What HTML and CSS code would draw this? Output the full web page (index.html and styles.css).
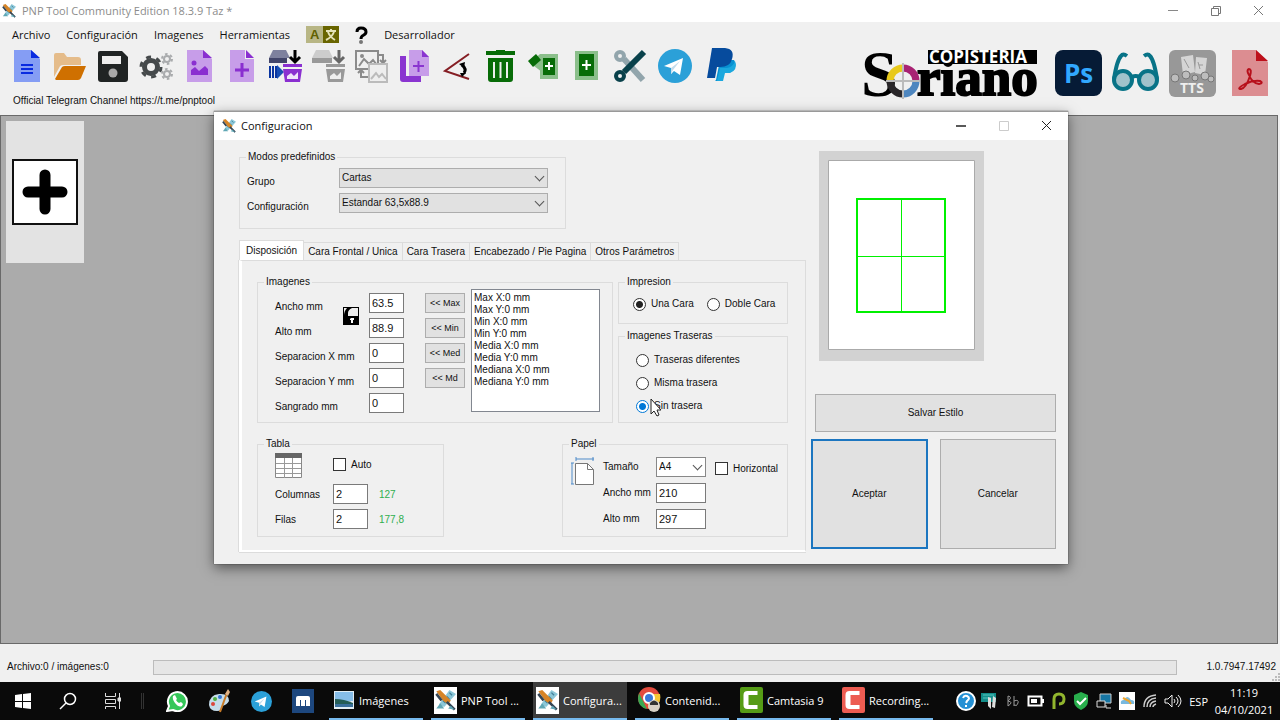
FILE: index.html
```html
<!DOCTYPE html>
<html lang="es">
<head>
<meta charset="utf-8">
<title>PNP Tool Community Edition</title>
<link rel="stylesheet" href="styles.css">
</head>
<body>
<svg class="defs" aria-hidden="true">
  <symbol id="app" viewBox="0 0 16 16">
    <path d="M11 0l5 3-9 10-4-2z" fill="#8cc7d8"/><path d="M11 2l2 2M9 5l2 2M6 8l2 2" stroke="#42809a"/>
    <path d="M1 1l3-1 8 8-2 3-4-3z" fill="#d68427"/><path d="M9 9l6 6M1 3l4 5" stroke="#354554" stroke-width="2"/>
    <path d="M1 14l3-4 3 4zM10 14l2-2 3 3z" fill="#5fa7b5"/>
  </symbol>
  <symbol id="plane" viewBox="0 0 34 34">
    <circle cx="17" cy="17" r="17" fill="#2ba0d8"/><path d="M6 17L25 9l-3 17-6-4-3 3v-6z" fill="#fff"/><path d="M13 19l9-7-7 9-2 4z" fill="#c3dcec"/>
  </symbol>
  <symbol id="cam" viewBox="0 0 22 26">
    <path d="M17 4H7Q3 4 3 8v10q0 4 4 4h10v-4H8V8h9z" fill="#fff"/>
  </symbol>
</svg>

<header class="titlebar">
  <svg class="app-icon"><use href="#app"/></svg>
  <span class="title">PNP Tool Community Edition 18.3.9 Taz *</span>
  <div class="caption">
    <button aria-label="Minimizar"><svg width="12" height="12"><path d="M1 5.500h10" stroke="#888"/></svg></button>
    <button aria-label="Restaurar"><svg width="12" height="12" fill="none" stroke="#777"><path d="M1.500 3.500h7v7h-7zM3.500 3v-1.500h7v7H9"/></svg></button>
    <button aria-label="Cerrar"><svg width="12" height="12"><path d="M1 1l9 9M10 1l-9 9" stroke="#777"/></svg></button>
  </div>
</header>

<nav class="menubar">
  <button>Archivo</button>
  <button>Configuración</button>
  <button>Imagenes</button>
  <button>Herramientas</button>
  <button aria-label="Idioma"><svg width="33" height="17"><path d="M0 0h17v17H0z" fill="#b8b685"/><path d="M17 0h16v17H17z" fill="#696500"/><text x="4" y="13" class="az">A</text><path d="M20 5h10M25 3v2M22 6q2 5 7 8M28 6q-2 5-8 8" fill="none" stroke="#e5e3b8" stroke-width="2"/></svg></button>
  <button aria-label="Ayuda"><svg width="13" height="18"><path d="M2 6q0-4 4-4 5 0 5 4 0 2-3 3.500-2 1-2 3.500" fill="none" stroke="#000" stroke-width="3"/><circle cx="6" cy="16" r="2" fill="#777"/></svg></button>
  <button>Desarrollador</button>
</nav>

<section class="toolarea">
  <div class="toolleft">
    <div class="toolbar">
      <button aria-label="Nuevo"><svg viewBox="0 0 34 34"><path d="M4 1h17l9 9v23H4z" fill="#859df4"/><path d="M21 1v8h9z" fill="#0a2be0"/><path d="M11 16h12M11 20h12M11 24h12" stroke="#0a2be0" stroke-width="2"/></svg></button>
      <button aria-label="Abrir"><svg viewBox="0 0 34 34"><path d="M1 28V6q0-2 2-2h8l3 4h11q3 0 3 3v5H10q-3 0-4 3z" fill="#e5bc8a"/><path d="M2 30l7-12q1-1 3-1h21l-5 12q-1 2-3 2H3z" fill="#cf7000"/></svg></button>
      <button aria-label="Guardar"><svg viewBox="0 0 34 34"><path d="M4 2h22l6 6v22q0 3-3 3H5q-3 0-3-3V4q0-2 2-2z" fill="#202424"/><path d="M6 7h19v8H6z" fill="#eee"/><circle cx="17" cy="24" r="4.500" fill="#aaa"/></svg></button>
      <button aria-label="Opciones"><svg viewBox="0 0 34 34" fill="none"><circle cx="12" cy="18" r="6.500" stroke="#45494b" stroke-width="5"/><circle cx="12" cy="18" r="10" stroke="#45494b" stroke-width="3" stroke-dasharray="5 5.470"/><circle cx="28" cy="10" r="3" stroke="#a9abad" stroke-width="2"/><circle cx="28" cy="10" r="5" stroke="#a9abad" stroke-width="2" stroke-dasharray="2.600 2.630"/><circle cx="28" cy="25" r="3" stroke="#a9abad" stroke-width="2"/><circle cx="28" cy="25" r="5" stroke="#a9abad" stroke-width="2" stroke-dasharray="2.600 2.630"/></svg></button>
      <button aria-label="Imagen"><svg viewBox="0 0 34 34"><path d="M5 1h16l9 9v23H5z" fill="#c79de9"/><path d="M21 1v8h9zM9 26v-5l4-3 4 4 6-5 3 3v6z" fill="#8a2fd0"/><circle cx="12" cy="14" r="2.500" fill="#8a2fd0"/></svg></button>
      <button aria-label="Añadir imagen"><svg viewBox="0 0 34 34"><path d="M5 1h15v9h9v23H5z" fill="#c79de9"/><path d="M21 1v8h8z" fill="#8a2fd0"/><path d="M10 21h14M17 14v14" stroke="#8a2fd0" stroke-width="3"/></svg></button>
      <button aria-label="Importar"><svg viewBox="0 0 34 34"><path d="M5 1h13l4 8H1z" fill="#7e819e"/><path d="M1 9h18v5H1z" fill="#42456a"/><path d="M2 17v12M5 17v12M8 17v12" stroke="#0a35a0" stroke-width="2"/><path d="M9 16l7 7-7 7z" fill="#174eb4"/><path d="M27 1v10M22 8l5 5 5-5" fill="none" stroke="#000" stroke-width="3"/><path d="M15 15h19v3H15zM15 20h19l-2 13H17z" fill="#8a2fd0"/><path d="M19 30v-3l4-3 3 3 4-4v7z" fill="#f0e3fa"/></svg></button>
      <button aria-label="Importar archivo"><svg viewBox="0 0 34 34"><path d="M5 1h13l4 8H1z" fill="#ccc"/><path d="M1 9h20v5H1z" fill="#999"/><path d="M28 1v10M23 8l5 5 5-5" fill="none" stroke="#666" stroke-width="3"/><path d="M15 15h19v3H15zM15 20h19l-2 13H17z" fill="#999"/><path d="M19 30v-3l4-3 3 3 4-4v7z" fill="#eee"/></svg></button>
      <button aria-label="Reemplazar"><svg viewBox="0 0 34 34" fill="none" stroke="#8b8b8b" stroke-width="2"><path d="M2 2h22v18H2zM5 17l5-7 5 5 4-4 4 5M24 6h5v8M26 11l3 3 3-3M7 20v8h8M4 24l3-3 3 3"/><circle cx="8" cy="7" r="1"/><g stroke="#bbb"><path d="M15 15h18v18H15z" fill="#eee"/><path d="M17 30l5-6 3 4 3-3 4 5"/></g></svg></button>
      <button aria-label="Duplicar"><svg viewBox="0 0 34 34"><path d="M3 7h6v20h15v6H6q-3 0-3-3z" fill="#8a35d0"/><path d="M12 1h13l7 7v19H12z" fill="#c79de9"/><path d="M25 1v7h7z" fill="#8a35d0"/><path d="M16 17h11M21.500 12v11" stroke="#8a35d0" stroke-width="2"/></svg></button>
      <button aria-label="Rotar"><svg viewBox="0 0 34 34" fill="none"><path d="M29 5L5 22l24 8" stroke="#851e24" stroke-width="2"/><path d="M22 16q5 4 2 8" stroke="#000" stroke-width="3"/><path d="M19 15l6-2-1 6zM20 24l6 0-4 4z" fill="#000"/></svg></button>
      <button aria-label="Eliminar"><svg viewBox="0 0 34 34"><path d="M3 2h10V1h9v1h10v4H3zM5 9h25v21q0 3-3 3H8q-3 0-3-3z" fill="#086c08"/><path d="M11 13v16M17.500 13v16M24 13v16" stroke="#eee" stroke-width="2"/></svg></button>
      <button aria-label="Girar cartas"><svg viewBox="0 0 34 34"><path d="M14 5h18v25H14z" fill="#8bbf8b"/><path d="M17 9h12v17H17z" fill="#086c08"/><path d="M19 17h8M23 13v8" stroke="#fff" stroke-width="2"/><path d="M4 14l10-9 2 6v12z" fill="#8bbf8b"/><path d="M2 12l8-7 5 6-8 7z" fill="#086c08"/></svg></button>
      <button aria-label="Añadir carta"><svg viewBox="0 0 34 34"><path d="M6 2h23v29H6z" fill="#8bbf8b"/><path d="M10 5h15v22H10z" fill="#086c08"/><path d="M13 16h9M17.500 11v10" stroke="#fff" stroke-width="2"/></svg></button>
      <button aria-label="Cortar"><svg viewBox="0 0 34 34" fill="none"><g stroke="#92a5ac" stroke-width="4"><circle cx="8" cy="7" r="4"/><path d="M12 10l19 21" stroke-width="6"/></g><g stroke="#09414b" stroke-width="4"><circle cx="8" cy="27" r="4"/><path d="M12 23L32 3" stroke-width="6"/></g></svg></button>
      <div class="social">
        <button aria-label="Telegram"><svg><use href="#plane"/></svg></button>
        <button aria-label="PayPal"><svg viewBox="0 0 34 34"><path d="M12 31l4-20h14q5 8-5 13h-6l-2 8h-6z" fill="#0891d2"/><path d="M8-1h13q10 1 7 11-2 8-12 8h-3l-2 11H3z" fill="#064b9d"/><path d="M13 32l3-13h7q6-1 8-7 3 9-5 12h-5l-2 8z" fill="#1ba8de"/></svg></button>
      </div>
    </div>
    <p class="channel">Official Telegram Channel https://t.me/pnptool</p>
  </div>
  <div class="brands">
    <svg class="soriano" viewBox="0 0 178 50">
      <text x="0" y="46" class="logo-s">S</text><text x="56" y="45" class="logo-rest">riano</text>
      <path d="M67 0h109v14H67z"/><text x="68" y="13" class="logo-top">COPISTERIA</text>
      <g fill="none" stroke-width="7"><path d="M29 31a13 13 0 0 1 13-13" stroke="#e8c91b"/><path d="M42 18a13 13 0 0 1 13 13" stroke="#a82273"/><path d="M55 31a13 13 0 0 1-13 13" stroke="#4e86bf"/><path d="M42 44a13 13 0 0 1-13-13" stroke="#292629"/></g>
      <path d="M25 31h34M42 13v36" stroke="#bbb" stroke-width="2"/>
    </svg>
    <svg class="brand" viewBox="0 0 47 47"><rect width="47" height="46" rx="8" fill="#061b36"/><text x="9" y="33" class="ps">Ps</text></svg>
    <svg class="brand" viewBox="0 0 47 47" fill="#a0c2cb" stroke="#087387" stroke-width="4"><path d="M2 29q3-19 7-23 2-3 6 0M45 29Q42 10 38 6q-2-3-6 0M20 27q4-2 7 0" fill="none"/><circle cx="11" cy="30" r="9"/><circle cx="36" cy="30" r="9"/></svg>
    <svg class="brand" viewBox="0 0 47 47"><rect width="47" height="47" rx="6" fill="#989898"/><path d="M12 7l12-2 2 17-12 3zM27 7l11 1-2 17-10-2z" fill="#d5d5d5"/><path d="M15 9l5 9M30 15l4 0M29 12l2 7" stroke="#999"/><g fill="#bdbdbd" stroke="#777"><circle cx="6" cy="28" r="4"/><circle cx="17" cy="25" r="4"/><circle cx="26" cy="28" r="3"/><circle cx="36" cy="26" r="4"/><circle cx="42" cy="29" r="3"/></g><text x="11" y="43" class="tts">TTS</text></svg>
    <svg class="pdf" viewBox="0 0 36 47"><path d="M0 0h24l12 12v34H0z" fill="#dc8d91"/><path d="M24 0v11h12z" fill="#bd101b"/><path d="M17 19q3 0 1 7-4 12-9 13-5 0 4-5 8-4 15-3 4 2-1 3-7-1-10-9-3-5 0-6z" fill="none" stroke="#b7101b" stroke-width="2"/></svg>
  </div>
</section>

<main class="workspace">
  <button class="addcard" aria-label="Añadir"><svg width="66" height="66"><path d="M1 1h64v64H1z" fill="#fff" stroke="#111" stroke-width="2"/><path d="M33 16v34M16 33h34" stroke="#000" stroke-width="11" stroke-linecap="round"/></svg></button>
</main>

<footer class="status">
  <span>Archivo:0 / imágenes:0</span>
  <progress value="0" max="100" aria-label="Progreso"></progress>
  <span>1.0.7947.17492</span>
  <svg class="grip" width="8" height="8"><path d="M6 0h2v2H6zM3 3h2v2H3zM6 3h2v2H6zM0 6h2v2H0zM3 6h2v2H3zM6 6h2v2H6z" fill="#bbb"/></svg>
</footer>

<nav class="taskbar">
  <div class="shell">
    <button aria-label="Inicio"><svg width="16" height="16" fill="#fff"><path d="M0 2l7-1v7H0zM8 1l8-1v8H8zM0 9h7v6l-7-1zM8 9h8v7l-8-1z"/></svg></button>
    <button aria-label="Buscar"><svg width="18" height="18" fill="none" stroke="#fff" stroke-width="1.500"><circle cx="11" cy="7" r="5.500"/><path d="M7 11l-6 6"/></svg></button>
    <button aria-label="Vista de tareas"><svg width="16" height="16" fill="none" stroke="#ddd"><path d="M.5 0v3.500h10V0M.5 6.500h10v4H.5zM.5 16v-2.500h10V16M14.500 0v16"/><path d="M13 5h3v3h-3z" fill="#ddd"/></svg></button>
  </div>
  <span class="divider"></span>
  <div class="pinned">
    <button aria-label="WhatsApp"><svg width="22" height="22"><path d="M1 21l2-5a9.500 9.500 0 1 1 4 4z" fill="#35c759" stroke="#fff" stroke-width="2"/><path d="M7 6l2-1 2 4-1 1q1 2 3 3l2-1 2 2-1 2q-3 2-7-3-3-4-2-7z" fill="#fff"/></svg></button>
    <button aria-label="Paint"><svg width="22" height="24"><path d="M1 16Q1 6 11 5q10-1 10 7-2 4-7 5 1 5-5 5-7 0-8-6z" fill="#c5dcea"/><circle cx="5" cy="15" r="2" fill="#db463b"/><circle cx="7" cy="10" r="2" fill="#4fae42"/><circle cx="12" cy="8" r="2" fill="#3475d2"/><path d="M12 23l7-19" stroke="#c97b27" stroke-width="2"/><path d="M17 5l3-5 2 3-2 4z" fill="#e0b184"/></svg></button>
    <button aria-label="Telegram"><svg width="21" height="21"><use href="#plane"/></svg></button>
    <button aria-label="Maxthon"><svg width="22" height="24"><path d="M0 0h22v24H0z" fill="#1d477e"/><path d="M4 17V9q0-2 2-2h10q2 0 2 2v8h-4v-6h-1v6H9v-6H8v6z" fill="#fff"/></svg></button>
  </div>
  <div class="tasks">
    <button><svg width="20" height="18"><path d="M0 0h20v18H0z" fill="#e2edf4"/><path d="M1 1h18v9H1z" fill="#86bde9"/><path d="M1 8q9 0 18 4v4H1z" fill="#245d57"/><path d="M1 13h18v3H1z" fill="#396f9c"/></svg>Imágenes</button>
    <button><svg width="23" height="27"><path d="M0 0h23v27H0z" fill="#fff"/><use href="#app" x="1" y="3" width="21" height="21"/></svg>PNP Tool ...</button>
    <button class="active"><svg width="23" height="27"><path d="M0 0h23v27H0z" fill="#fff"/><use href="#app" x="1" y="3" width="21" height="21"/></svg>Configura...</button>
    <button><svg width="23" height="26"><circle cx="11" cy="11" r="11" fill="#e34b3e"/><path d="M1 6l8 16Q0 20 0 11z" fill="#38a852"/><path d="M11 7h11q2 11-8 15l-4-1z" fill="#f5c633"/><circle cx="11" cy="11" r="5" fill="#3978d8" stroke="#fff" stroke-width="2"/><circle cx="16" cy="19" r="6" fill="#d8d1c6"/><path d="M12 16q4-5 8 0v2h-8z" fill="#333"/></svg>Contenid...</button>
    <button><svg width="23" height="26"><rect width="23" height="26" rx="2" fill="#569c16"/><use href="#cam"/></svg>Camtasia 9</button>
    <button><svg width="23" height="26"><rect width="23" height="26" rx="2" fill="#ed5c52"/><use href="#cam"/></svg>Recording...</button>
  </div>
  <div class="tray">
    <svg viewBox="0 0 20 20"><circle cx="10" cy="10" r="9" fill="#2490d4" stroke="#fff" stroke-width="2"/><path d="M7 7q1-3 4-2 4 2 0 5l-1 2M10 14v2" stroke="#fff" stroke-width="2" fill="none"/></svg>
    <svg viewBox="0 0 20 20"><path d="M2 2h15v9H2z" fill="#148d8a"/><path d="M4 4h11M4 7h8" stroke="#54c4bd"/><path d="M9 6l3 1v11l-3-3zM14 5l3 2-1 10-3-1z" fill="#ddd"/></svg>
    <svg viewBox="0 0 20 20" fill="none" stroke="#999"><path d="M6 5v10M6 5q5 1 0 5 6 1 0 5M12 5v10M12 10q5-2 4 2t-4 2"/></svg>
    <svg viewBox="0 0 20 20"><path d="M3.500 5.500h13v9h-13z" fill="none" stroke="#fff" stroke-width="2"/><path d="M6 8h6v4H6zM17 8h2v4h-2z" fill="#fff"/></svg>
    <svg viewBox="0 0 20 20" fill="none"><path d="M6 18V8q0-5 5-5t5 5-5 5" stroke="#91b52e" stroke-width="3"/></svg>
    <svg viewBox="0 0 20 20"><path d="M10 1l7 3v6q0 6-7 9-7-3-7-9V4z" fill="#28ae4c"/><path d="M6 10l3 3 6-6" fill="none" stroke="#fff" stroke-width="2"/></svg>
    <svg viewBox="0 0 20 20"><path d="M6 3h11v9H6z" fill="#1776a4" stroke="#ccc"/><path d="M3 10h8v6H3zM12 14v3h5" fill="#111" stroke="#ddd"/></svg>
    <svg viewBox="0 0 20 20"><path d="M2 1h16v18H2z" fill="#fff"/><path d="M4 13q-1-4 3-4 3-6 7 0 4 0 3 4z" fill="#79b9df"/><path d="M6 7l6 3 2 3" stroke="#efa52c" stroke-width="2" fill="none"/></svg>
    <svg viewBox="0 0 20 20" fill="none" stroke="#ccc" stroke-width="1.500"><path d="M4 16Q4 5 16 4M7 16q0-8 9-9M10 16q0-5 6-6M13 16q0-2 3-3"/></svg>
    <svg viewBox="0 0 20 20" fill="none" stroke="#eee"><path d="M2 8h3l4-4v12l-4-4H2zM11 8q2 2 0 4M13 6q4 4 0 8M15 4q6 6 0 12"/></svg>
  </div>
  <span class="lang">ESP</span>
  <time class="clock">11:19<br>04/10/2021</time>
</nav>

<section class="dialog" role="dialog" aria-labelledby="dlg-title">
  <header class="dlg-title">
    <svg class="app-icon"><use href="#app"/></svg>
    <h1 id="dlg-title">Configuracion</h1>
    <div class="caption">
      <button aria-label="Minimizar"><svg width="12" height="12"><path d="M1 6h10" stroke="#222" stroke-width="1.500"/></svg></button>
      <button aria-label="Maximizar" disabled><svg width="12" height="12"><path d="M1.500 1.500h9v9h-9z" fill="none" stroke="#ccc"/></svg></button>
      <button aria-label="Cerrar"><svg width="12" height="12"><path d="M1 1l9 9M10 1l-9 9" stroke="#222"/></svg></button>
    </div>
  </header>
  <form class="dlg-body">
    <div class="settings">
      <fieldset class="modes">
        <legend>Modos predefinidos</legend>
        <div class="modes-grid">
          <label for="grupo">Grupo</label>
          <div class="combo gray"><select id="grupo"><option>Cartas</option></select></div>
          <label for="conf">Configuración</label>
          <div class="combo gray"><select id="conf"><option>Estandar 63,5x88.9</option></select></div>
        </div>
      </fieldset>
      <div class="tabs" role="tablist">
        <button type="button" role="tab" class="selected" aria-selected="true">Disposición</button>
        <button type="button" role="tab">Cara Frontal / Unica</button>
        <button type="button" role="tab">Cara Trasera</button>
        <button type="button" role="tab">Encabezado / Pie Pagina</button>
        <button type="button" role="tab">Otros Parámetros</button>
      </div>
      <div class="panel" role="tabpanel">
        <div class="panel-row">
          <fieldset class="images">
            <legend>Imagenes</legend>
            <div class="images-flow">
              <div class="size-grid">
                <label for="ancho">Ancho mm</label><input id="ancho" value="63.5">
                <label for="alto">Alto mm</label><input id="alto" value="88.9">
                <label for="sepx">Separacion X mm</label><input id="sepx" value="0">
                <label for="sepy">Separacion Y mm</label><input id="sepy" value="0">
                <label for="sang">Sangrado mm</label><input id="sang" value="0">
                <svg class="lock" width="16" height="18"><path d="M0 0h16v18H0z"/><path d="M1 1h14v8H5V6q0-3 4-5H4Q1 4 1 9z" fill="#eee"/><path d="M8 11h3v2h-1v3H8v-3H7v-1z" fill="#fff"/></svg>
              </div>
              <div class="stat-buttons">
                <button type="button">&lt;&lt; Max</button>
                <button type="button">&lt;&lt; Min</button>
                <button type="button">&lt;&lt; Med</button>
                <button type="button">&lt;&lt; Md</button>
              </div>
              <textarea readonly aria-label="Medidas">Max X:0 mm
Max Y:0 mm
Min X:0 mm
Min Y:0 mm
Media X:0 mm
Media Y:0 mm
Mediana X:0 mm
Mediana Y:0 mm</textarea>
            </div>
          </fieldset>
          <div class="print-col">
            <fieldset>
              <legend>Impresion</legend>
              <div class="sides">
                <label><input type="radio" name="caras" checked>Una Cara</label>
                <label><input type="radio" name="caras">Doble Cara</label>
              </div>
            </fieldset>
            <fieldset>
              <legend>Imagenes Traseras</legend>
              <div class="backs">
                <label><input type="radio" name="tras">Traseras diferentes</label>
                <label><input type="radio" name="tras">Misma trasera</label>
                <label><input type="radio" name="tras" class="hot" checked>Sin trasera</label>
              </div>
            </fieldset>
          </div>
        </div>
        <div class="panel-row lower">
          <fieldset class="table-box">
            <legend>Tabla</legend>
            <div class="table-grid">
              <svg width="27" height="26"><path d="M.5.5h26v24H.5z" fill="#fff" stroke="#888"/><path d="M0 0h27v5H0z" fill="#666"/><path d="M1 10.500h25M1 15.500h25M1 20.500h25M9.500 5v20M17.500 5v20" stroke="#999"/></svg>
              <label class="check"><input type="checkbox">Auto</label>
              <label for="cols">Columnas</label><input id="cols" value="2"><output>127</output>
              <label for="rows">Filas</label><input id="rows" value="2"><output>177,8</output>
            </div>
          </fieldset>
          <fieldset class="paper-box">
            <legend>Papel</legend>
            <div class="paper-flow">
              <svg width="24" height="28" fill="none"><path d="M4.500 6.500h12l6 6v15h-18z" fill="#fff" stroke="#777"/><path d="M16.500 6.500v6h6" stroke="#777"/><path d="M5 2h18M5 0v4M22 0v4M1 6v21M0 6h3M0 27h3" stroke="#4f8bc9"/></svg>
              <div class="paper-grid">
                <label for="tam">Tamaño</label>
                <div class="combo"><select id="tam"><option>A4</option></select></div>
                <label class="check"><input type="checkbox">Horizontal</label>
                <label for="pan">Ancho mm</label><input id="pan" value="210">
                <label for="pal">Alto mm</label><input id="pal" value="297">
              </div>
            </div>
          </fieldset>
        </div>
      </div>
    </div>
    <div class="actions">
      <div class="preview"><svg width="147" height="190" fill="none"><path d="M.5.5h146v189H.5z" fill="#fff" stroke="#aaa"/><path d="M29 39h88v113H29z" stroke="#00f000" stroke-width="2"/><path d="M73.500 39v113M29 96.500h88" stroke="#00f000"/></svg></div>
      <button type="button" class="push save">Salvar Estilo</button>
      <div class="confirm">
        <button type="button" class="push default">Aceptar</button>
        <button type="button" class="push">Cancelar</button>
      </div>
    </div>
  </form>
  <svg class="cursor" width="12" height="19"><path d="M1 1v15l3-3 3 5 2-1-2-5h4z" fill="#fff" stroke="#222"/></svg>
</section>
</body>
</html>
```
FILE: styles.css
```css
* { box-sizing: border-box; }
body {
  margin: 0;
  height: 100vh;
  display: flex;
  flex-direction: column;
  position: relative;
  overflow: hidden;
  background: #f0f0f0;
  color: #111;
  font: 10px/14px "Liberation Sans", sans-serif;
}
button, input, select, textarea { font: inherit; color: inherit; margin: 0; }
button { border: 0; padding: 0; background: none; }
svg { display: block; flex: none; }
.defs { position: absolute; width: 0; height: 0; }
.app-icon { width: 14px; height: 14px; }

.titlebar {
  height: 22px;
  flex: none;
  display: flex;
  align-items: center;
  gap: 6px;
  padding-left: 2px;
  background: #fff;
  color: #8c8c8c;
  font: 11px/16px "Open Sans", sans-serif;
}
.caption { display: flex; margin-left: auto; }
.caption button { width: 43px; display: grid; place-items: center; }

.menubar {
  height: 25px;
  flex: none;
  display: flex;
  align-items: center;
  gap: 16px;
  padding-left: 12px;
  font: 11px/16px "Open Sans", sans-serif;
}
.az { font: bold 13px "Liberation Sans", sans-serif; fill: #606000; }

.toolarea {
  height: 68px;
  flex: none;
  display: flex;
  justify-content: space-between;
  padding: 2px 12px 0 10px;
}
.toolbar { display: flex; gap: 9px; }
.toolbar svg { width: 34px; height: 34px; overflow: visible; }
.social { display: flex; gap: 12px; padding-left: 3px; }
.channel { margin: 11px 0 0 3px; }
.brands { display: flex; gap: 10px; padding-top: 1px; }
.brand { width: 47px; height: 47px; }
.pdf { width: 36px; height: 47px; margin-left: 6px; }
.soriano { width: 178px; height: 50px; margin-right: 6px; overflow: visible; }
.logo-s { font: bold 66px "Liberation Serif", serif; }
.logo-rest { font: bold 53px "Liberation Serif", serif; stroke: #000; stroke-width: 2px; }
.logo-top { font: bold 17px "Open Sans", sans-serif; fill: #fff; }
.ps { font: bold 26px "Open Sans", sans-serif; fill: #31a8ff; }
.tts { font: bold 14px "Open Sans", sans-serif; fill: #eee; }

.workspace {
  flex: 1;
  margin-right: 2px;
  padding: 5px;
  border: 1px solid #696969;
  background: #ababab;
}
.addcard {
  width: 78px;
  height: 142px;
  display: grid;
  place-items: center;
  background: #e3e3e3;
}

.status {
  height: 38px;
  flex: none;
  display: flex;
  align-items: center;
  position: relative;
  padding: 8px 4px 0 7px;
}
.status span:first-child { width: 146px; }
.status progress {
  flex: 1;
  height: 15px;
  margin-right: 29px;
  appearance: none;
  border: 1px solid #bcbcbc;
  background: #e6e6e6;
}
.status progress::-webkit-progress-bar { background: #e6e6e6; }
.grip { position: absolute; right: 0; bottom: 1px; }

.taskbar {
  height: 38px;
  flex: none;
  display: flex;
  align-items: center;
  background: #0a0a0a;
  color: #fff;
  font: 11px/17px "Open Sans", sans-serif;
}
.shell { display: flex; }
.shell button { width: 45px; display: grid; place-items: center; }
.divider { width: 3px; height: 16px; margin: 0 12px 0 6px; border: solid #333; border-width: 0 1px; }
.pinned { display: flex; }
.pinned button { width: 42px; display: grid; place-items: center; }
.tasks { display: flex; gap: 8px; margin-left: 5px; height: 38px; }
.tasks button {
  width: 94px;
  display: flex;
  align-items: center;
  gap: 4px;
  padding-left: 3px;
  white-space: nowrap;
  border-bottom: 2px solid #76b9ed;
}
.tasks button:first-child { gap: 5px; padding-left: 5px; }
.tasks .active { background: #3c3c3c; }
.tray { display: flex; gap: 3px; margin-left: auto; }
.tray svg { width: 20px; height: 20px; }
.lang { margin-left: 6px; }
.clock { width: 72px; text-align: center; }

.dialog {
  position: absolute;
  left: 214px;
  top: 111px;
  width: 854px;
  background: #f0f0f0;
  border-top: 1px solid #999;
  box-shadow: 0 4px 12px rgba(0, 0, 0, .5), 0 0 1px #333;
}
.dlg-title {
  height: 28px;
  display: flex;
  align-items: center;
  gap: 5px;
  padding-left: 8px;
  background: #fff;
}
.dlg-title h1 { margin: 0; font: 11px/16px "Open Sans", sans-serif; }
.dlg-body { display: flex; justify-content: space-between; padding: 10px 12px 12px 25px; }
fieldset { min-width: 0; margin: 0; padding: 0; border: 1px solid #dcdcdc; }
legend { margin-left: 6px; padding: 0 2px; }
.settings { width: 567px; }
.modes { width: 327px; height: 79px; }
.modes-grid {
  display: grid;
  grid-template-columns: 92px 209px;
  grid-auto-rows: 25px;
  padding: 4px 0 0 7px;
}
.modes-grid label, .size-grid label { padding-top: 7px; white-space: nowrap; }
.combo { position: relative; height: 20px; }
.combo select {
  appearance: none;
  width: 100%;
  height: 100%;
  padding: 0 2px;
  border: 1px solid #888;
  border-radius: 0;
  background: #fff;
}
.combo.gray select { background: #e1e1e1; border-color: #adadad; }
.combo::after {
  content: "";
  position: absolute;
  right: 5px;
  top: 5px;
  width: 6px;
  height: 6px;
  border: solid #555;
  border-width: 0 1px 1px 0;
  transform: rotate(45deg);
}

.tabs { display: flex; align-items: flex-end; margin-top: 11px; }
.tabs button {
  height: 18px;
  padding: 0 4px;
  white-space: nowrap;
  border: 1px solid #dcdcdc;
  border-width: 1px 1px 0 0;
}
.tabs .selected { height: 20px; padding: 0 6px; background: #fff; border-left-width: 1px; }
.panel {
  padding: 14px 17px 13px 15px;
  border: 1px solid #dcdcdc;
  border-left: 3px solid #fff;
  border-bottom: 2px solid #fff;
  box-shadow: 0 1px #dcdcdc, -1px 0 #dcdcdc;
}
.panel-row { display: flex; justify-content: space-between; }
.lower { margin-top: 14px; }
.images { width: 356px; height: 148px; }
.images-flow { display: flex; padding: 0 12px 0 17px; }
.size-grid {
  display: grid;
  grid-template-columns: 94px 35px;
  grid-auto-rows: 25px;
  padding-top: 4px;
  position: relative;
}
.lock { position: absolute; left: 68px; top: 18px; }
.panel input:not([type]) {
  width: 100%;
  height: 20px;
  padding: 0 2px 1px;
  border: 1px solid #7a7a7a;
  background: #fff;
  font-size: 11px;
}
.stat-buttons { display: flex; flex-direction: column; gap: 5px; width: 40px; margin: 4px 6px 0 21px; }
.stat-buttons button { height: 20px; border: 1px solid #adadad; background: #e1e1e1; font-size: 9px; }
.images textarea {
  flex: 1;
  min-width: 0;
  height: 123px;
  padding: 2px;
  border: 1px solid #828790;
  border-radius: 0;
  background: #fff;
  resize: none;
  overflow: hidden;
  line-height: 12px;
}
.print-col { width: 170px; display: flex; flex-direction: column; gap: 5px; }
.print-col fieldset:first-child { height: 49px; }
.print-col fieldset { height: 94px; }
.print-col label, .check { display: flex; align-items: center; gap: 5px; white-space: nowrap; }
.sides { display: flex; gap: 13px; padding: 8px 0 0 14px; }
.backs { display: grid; gap: 9px; padding: 10px 0 0 17px; }
input[type="radio"], input[type="checkbox"] {
  appearance: none;
  width: 13px;
  height: 13px;
  flex: none;
  border: 1px solid #333;
  background: #fff;
}
input[type="radio"] { border-radius: 50%; }
input[type="radio"]:checked { background: radial-gradient(#222 0 3px, #fff 4px); }
input.hot:checked { border-color: #0078d7; background: radial-gradient(#0078d7 0 3px, #fff 4px); }

.table-box { width: 187px; height: 100px; }
.table-grid {
  display: grid;
  grid-template-columns: 58px 35px 1fr;
  grid-template-rows: 33px 25px 25px;
  padding-left: 17px;
}
.table-grid > svg { margin-top: 2px; }
.table-grid .check { grid-column: 2 / 4; padding: 0 0 6px; }
.table-grid label, .table-grid output { padding-top: 4px; }
.table-grid output { padding-left: 11px; color: #2fae4e; }
.paper-box { width: 226px; height: 100px; }
.paper-flow { display: flex; gap: 8px; padding: 6px 0 0 8px; }
.paper-grid {
  display: grid;
  grid-template-columns: 53px 50px 1fr;
  grid-auto-rows: 26px;
}
.paper-grid label { padding-top: 3px; white-space: nowrap; }
.paper-grid .check { padding: 0 0 3px 9px; }
.paper-grid label:nth-of-type(3), .paper-grid label:nth-of-type(4) { grid-column: 1; }

.actions { width: 245px; display: flex; flex-direction: column; }
.preview { width: 165px; height: 210px; margin: 1px 0 33px 8px; padding: 9px; background: #d2d2d2; }
.push { border: 1px solid #adadad; background: #e1e1e1; }
.save { height: 38px; margin: 0 0 7px 4px; }
.confirm { display: grid; grid-template-columns: 1fr 1fr; gap: 12px; height: 110px; }
.default { border: 2px solid #1c76c0; }
.cursor { position: absolute; left: 436px; top: 286px; }
```
